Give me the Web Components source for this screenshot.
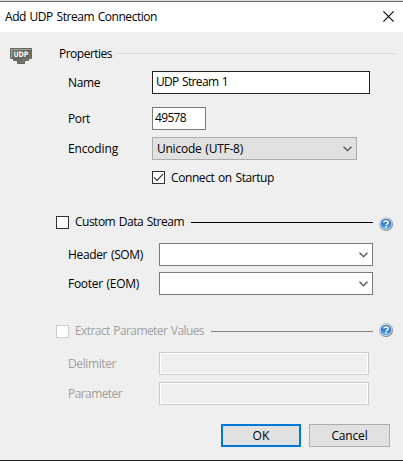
<!DOCTYPE html>
<html lang="en">
<head>
<meta charset="utf-8">
<title>Add UDP Stream Connection</title>
<style>
html, body { margin: 0; padding: 0; }
body { font: 12px/16px "Open Sans", "Noto Sans", sans-serif; color: #000; overflow: hidden; }
</style>
</head>
<body>
<dlg-window>
  <fit-text slot="title" width="152">Add UDP Stream Connection</fit-text>
  <udp-icon slot="icon"></udp-icon>

  <dlg-group style="--top:13px; --rule:#dcdcdc; --left:59px; --gap:4px; --rule-end:7px">
    <fit-text slot="caption" width="53">Properties</fit-text>
    <dlg-row style="--top:9px">
      <fit-text slot="label" width="32">Name</fit-text>
      <dlg-field style="--w:218px; --edge:#222"><fit-text width="72">UDP Stream 1</fit-text></dlg-field>
    </dlg-row>
    <dlg-row style="--top:13px">
      <fit-text slot="label" width="22">Port</fit-text>
      <dlg-field style="--w:54px; --pad:2px"><fit-text width="31">49578</fit-text></dlg-field>
    </dlg-row>
    <dlg-row style="--top:7px">
      <fit-text slot="label" width="50">Encoding</fit-text>
      <dlg-combo style="--w:205px; --edge:#adadad; --bg:#e1e1e1"><fit-text width="86">Unicode (UTF-8)</fit-text></dlg-combo>
    </dlg-row>
    <dlg-row style="--top:6px">
      <dlg-check checked><fit-text width="103">Connect on Startup</fit-text></dlg-check>
    </dlg-row>
  </dlg-group>

  <dlg-group style="--top:25px; --rule:#000; --left:56px; --gap:7px; --rule-end:6px; --lift:1px; --help-y:2px" help>
    <dlg-check slot="caption"><fit-text width="109">Custom Data Stream</fit-text></dlg-check>
    <dlg-row style="--top:12px; --label:91px">
      <fit-text slot="label" width="75">Header (SOM)</fit-text>
      <dlg-combo style="--w:214px"></dlg-combo>
    </dlg-row>
    <dlg-row style="--top:6px; --label:91px">
      <fit-text slot="label" width="71">Footer (EOM)</fit-text>
      <dlg-combo style="--w:214px"></dlg-combo>
    </dlg-row>
  </dlg-group>

  <dlg-group style="--top:28px; --rule:#838383; --left:56px; --gap:7px; --rule-end:6px; --lift:1px; --help-y:-4px; color:#a0a0a0" help>
    <dlg-check slot="caption" disabled><fit-text width="129">Extract Parameter Values</fit-text></dlg-check>
    <dlg-row style="--top:12px; --label:91px">
      <fit-text slot="label" width="48">Delimiter</fit-text>
      <dlg-field disabled style="--w:210px"></dlg-field>
    </dlg-row>
    <dlg-row style="--top:7px; --label:91px">
      <fit-text slot="label" width="54">Parameter</fit-text>
      <dlg-field disabled style="--w:210px"></dlg-field>
    </dlg-row>
  </dlg-group>

  <dlg-button slot="actions" primary style="--w:80px"><fit-text width="17">OK</fit-text></dlg-button>
  <dlg-button slot="actions" style="--w:81px"><fit-text width="36">Cancel</fit-text></dlg-button>
</dlg-window>

<script>
function define(name, html, setup) {
  const template = document.createElement('template');
  template.innerHTML = html;
  customElements.define(name, class extends HTMLElement {
    constructor() {
      super();
      this.attachShadow({ mode: 'open' }).append(template.content.cloneNode(true));
    }
    connectedCallback() { if (setup) setup(this); }
  });
}

// Text whose tracking is adjusted so that it fills a given width.
define('fit-text', `
  <style>:host { display: inline-block; white-space: nowrap; } span { display: inline-block; word-spacing: 1px; }</style>
  <span><slot></slot></span>`, el => {
  const span = el.shadowRoot.querySelector('span');
  const natural = span.getBoundingClientRect().width;
  const wanted = Number(el.getAttribute('width'));
  if (natural && wanted) {
    span.style.letterSpacing = ((wanted - natural) / el.textContent.length).toFixed(3) + 'px';
  }
});

define('dlg-chevron', `
  <style>:host { display: block; width: 9px; height: 6px; } svg { display: block; }</style>
  <svg width="9" height="6" viewBox="0 0 9 6"><path d="M.5.7 4.5 4.6 8.5.7" fill="none" stroke="#4b4b4b" stroke-width="1.2"/></svg>`);

define('close-icon', `
  <style>:host { display: block; width: 11px; height: 11px; } svg { display: block; }</style>
  <svg width="11" height="11" viewBox="0 0 11 11"><path d="M.4.4 10.6 10.6M10.6.4.4 10.6" stroke="#000" stroke-width="1.1"/></svg>`);

define('help-icon', `
  <style>:host { display: block; width: 14px; height: 14px; } svg { display: block; }</style>
  <svg width="14" height="14" viewBox="0 0 14 14">
    <defs>
      <linearGradient id="ring" x1="0" y1="0" x2=".6" y2="1"><stop stop-color="#dedede"/><stop offset="1" stop-color="#85827e"/></linearGradient>
      <linearGradient id="ball" x1="0" y1="0" x2="0" y2="1"><stop stop-color="#3478c8"/><stop offset=".5" stop-color="#2f7fd8"/><stop offset="1" stop-color="#68b8f6"/></linearGradient>
    </defs>
    <circle cx="7" cy="7" r="7" fill="url(#ring)"/>
    <circle cx="7" cy="7" r="5.9" fill="#d9e4ef"/>
    <circle cx="7" cy="7" r="5.3" fill="url(#ball)"/>
    <path d="M4.8 5.6C4.8 3.5 9.3 3.4 9.3 5.5 9.3 6.8 7.1 6.8 7.1 8.3" fill="none" stroke="#fff" stroke-width="1.5"/>
    <rect x="6.2" y="9.2" width="1.8" height="1.5" fill="#fff"/>
  </svg>`);

define('udp-icon', `
  <style>
    :host { display: block; width: 22px; height: 16px; }
    svg { display: block; }
    text { font: bold 7.5px "DejaVu Sans", sans-serif; fill: #fff; }
  </style>
  <svg width="22" height="16" viewBox="0 0 22 16">
    <defs><linearGradient id="metal" x1="0" y1="0" x2="1" y2="1"><stop stop-color="#8f8e82"/><stop offset=".5" stop-color="#66655a"/><stop offset="1" stop-color="#8b897b"/></linearGradient></defs>
    <path d="M.5.5H21.5V10.5H18.5V12.5H14.5V15.5H7.5V12.5H3.5V10.5H.5Z" fill="url(#metal)" stroke="#67665c"/>
    <path d="M1.5 10V1.5H20.5" fill="none" stroke="#a3a297"/>
    <rect x="3" y="2.5" width="16" height="7" fill="#605f55"/>
    <text x="3.4" y="8.6" textLength="15" lengthAdjust="spacingAndGlyphs">UDP</text>
  </svg>`);

define('dlg-field', `
  <style>
    :host { display: flex; align-items: center; box-sizing: border-box; width: var(--w); height: 23px;
      border: 1px solid var(--edge, #7a7a7a); background: #fff; padding: 0 0 2px var(--pad, 3px); }
    :host([disabled]) { border-color: #ccc; background: #efefef; box-shadow: inset 0 0 0 1px #fff; }
  </style><slot></slot>`);

define('dlg-combo', `
  <style>
    :host { display: flex; align-items: center; justify-content: space-between; box-sizing: border-box;
      width: var(--w); height: 23px; border: 1px solid var(--edge, #7a7a7a); background: var(--bg, #fff); padding: 0 4px 0 4px; }
    dlg-chevron { margin-left: auto; margin-top: 1px; }
  </style><slot></slot><dlg-chevron></dlg-chevron>`);

define('dlg-check', `
  <style>
    :host { display: flex; align-items: center; height: 16px; gap: 6px; }
    .box { box-sizing: border-box; width: 13px; height: 13px; border: 1px solid #333; background: #fff; }
    svg { display: none; }
    :host([checked]) svg { display: block; }
    :host([disabled]) .box { border-color: #ccc; }
  </style>
  <div class="box"><svg width="11" height="11" viewBox="0 0 11 11"><path d="M1 5.3 4 8.3 10 2.2" fill="none" stroke="#333" stroke-width="1.2"/></svg></div>
  <slot></slot>`);

define('dlg-row', `
  <style>
    :host { display: flex; align-items: center; height: 23px; margin-top: var(--top); padding-left: 68px; }
    .label { width: var(--label, 84px); flex: none; }
  </style>
  <div class="label"><slot name="label"></slot></div><slot></slot>`);

define('dlg-group', `
  <style>
    :host { display: block; padding-top: var(--top); }
    .head { display: flex; align-items: center; height: 17px; padding: 0 var(--rule-end) 0 var(--left); }
    .caption { padding-bottom: var(--lift, 0px); }
    .rule { flex: 1; height: 1px; margin-left: var(--gap); background: var(--rule); }
    help-icon { display: none; margin: var(--help-y, 0px) 4px 0 6px; }
    :host([help]) help-icon { display: block; }
  </style>
  <div class="head"><div class="caption"><slot name="caption"></slot></div><div class="rule"></div><help-icon></help-icon></div>
  <slot></slot>`);

define('dlg-button', `
  <style>
    :host { display: flex; align-items: center; justify-content: center; box-sizing: border-box;
      width: var(--w); height: 23px; background: #e1e1e1; border: 1px solid #adadad; }
    :host([primary]) { border: 2px solid #0078d7; }
  </style><slot></slot>`);

define('dlg-window', `
  <style>
    :host { display: flex; flex-direction: column; box-sizing: border-box; width: 403px; height: 461px;
      background: #efefef; border-bottom: 1px solid #222; }
    header { display: flex; align-items: center; justify-content: space-between; box-sizing: border-box; height: 32px; flex: none;
      background: #fff; border-top: 1px solid #ddd; padding: 0 9px 0 5px; box-shadow: inset 0 1px #6c6c6c; }
    main { display: grid; grid-template-columns: 403px; flex: 1; align-content: start; }
    .icon { grid-area: 1 / 1; padding: 16px 0 0 10px; height: 0; }
    .body { grid-area: 1 / 1; }
    footer { display: flex; justify-content: flex-end; gap: 8px; padding: 0 13px 13px 0; }
  </style>
  <header><slot name="title"></slot><close-icon></close-icon></header>
  <main><div class="icon"><slot name="icon"></slot></div><div class="body"><slot></slot></div></main>
  <footer><slot name="actions"></slot></footer>`);
</script>
</body>
</html>
